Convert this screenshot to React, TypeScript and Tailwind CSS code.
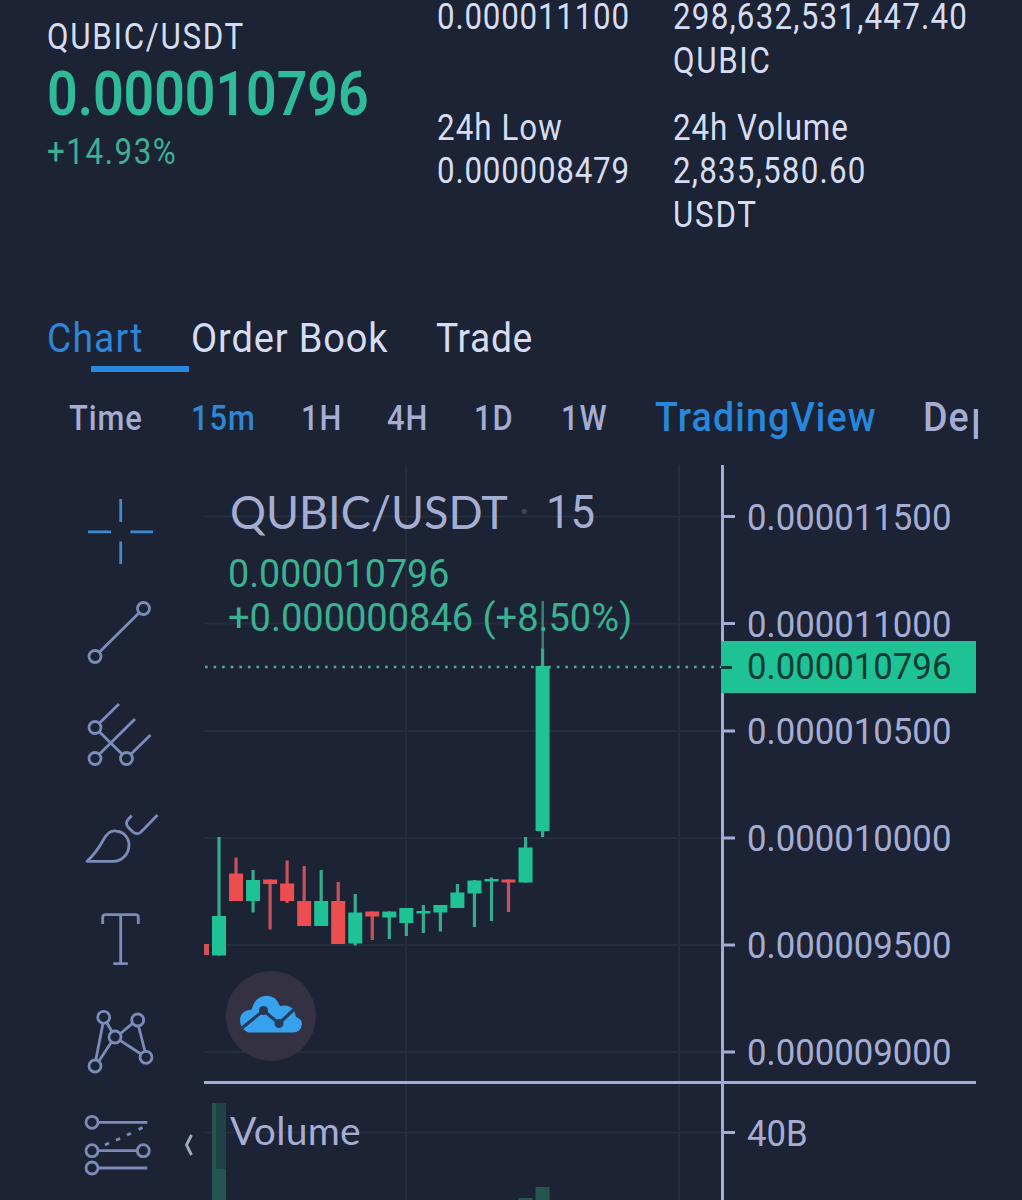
import type { ReactNode } from "react";
import { clsx } from "clsx";

type Candle = {
  up: boolean;
  open: number;
  close: number;
  high: number;
  low: number;
};

// y values are chart pixels, one candle per 17px step
const candles: Candle[] = [
  { up: true, open: 451, close: 490.5, high: 372, low: 490.5 },
  { up: false, open: 408.5, close: 436, high: 392.5, low: 436 },
  { up: true, open: 415, close: 436, high: 405, low: 447.5 },
  { up: false, open: 414.5, close: 419, high: 414.5, low: 464.5 },
  { up: false, open: 418.5, close: 436, high: 395.5, low: 438 },
  { up: false, open: 436, close: 461, high: 401, low: 461 },
  { up: true, open: 436, close: 461, high: 405, low: 461 },
  { up: false, open: 436, close: 479, high: 417, low: 479 },
  { up: true, open: 447.5, close: 478.5, high: 429, low: 480.5 },
  { up: false, open: 446.5, close: 451.5, high: 446.5, low: 475 },
  { up: true, open: 446.5, close: 452.5, high: 446.5, low: 474 },
  { up: true, open: 443, close: 458, high: 443, low: 471 },
  { up: true, open: 446, close: 448.5, high: 440, low: 468 },
  { up: true, open: 440, close: 447.5, high: 440, low: 466.5 },
  { up: true, open: 427.5, close: 443, high: 419, low: 443 },
  { up: true, open: 415.5, close: 428.5, high: 415, low: 462 },
  { up: true, open: 414, close: 416.5, high: 412.5, low: 456 },
  { up: false, open: 414.5, close: 417.5, high: 414.5, low: 447 },
  { up: true, open: 382.5, close: 417.5, high: 372, low: 417.5 },
  { up: true, open: 201, close: 366, high: 183, low: 372 },
];

const prices = [
  "0.000011500",
  "0.000011000",
  "0.000010500",
  "0.000010000",
  "0.000009500",
  "0.000009000",
];

const intervals = [
  { label: "Time", width: "w-[122px]", active: false },
  { label: "15m", width: "w-[110px]", active: true },
  { label: "1H", width: "w-[86px]", active: false },
  { label: "4H", width: "w-[87px]", active: false },
  { label: "1D", width: "w-[87px]", active: false },
  { label: "1W", width: "w-[94px]", active: false },
];

function Line({ className, children }: { className?: string; children: ReactNode }) {
  return (
    <span className={clsx("block w-max origin-left whitespace-nowrap", className)}>{children}</span>
  );
}

function Tool({ children, className }: { children: ReactNode; className?: string }) {
  return (
    <svg
      viewBox="0 0 80 102"
      className={clsx("h-[102px] w-20 shrink-0", className ?? "text-[#7d8bbb]")}
      fill="none"
      stroke="currentColor"
      strokeWidth="2.8"
    >
      {children}
    </svg>
  );
}

function Toolbar() {
  return (
    <div className="flex w-[124px] shrink-0 flex-col pt-[15px]">
      <Tool className="text-[#3f8ad0]">
        <path d="M8 51.8H31M50.5 51.8H73M40.7 19V42M40.7 61.5V84" />
      </Tool>
      <Tool>
        <circle cx="15" cy="74.5" r="6" />
        <circle cx="63.5" cy="26.5" r="6" />
        <path d="M19.3 70.2 59.2 30.8" />
      </Tool>
      <Tool>
        <circle cx="15" cy="43.5" r="6" />
        <circle cx="15" cy="74.5" r="6" />
        <circle cx="46.5" cy="74.5" r="6" />
        <path d="M19.3 39.2 39 20M19.3 70.2 55 35M50.8 70.2 70.5 51M19.3 47.8 42.2 70.2" />
      </Tool>
      <Tool>
        <path
          strokeLinejoin="round"
          d="M7 75.3C16 67 20 60 23.3 54C27 47 32 44.5 36 45C44 45.5 49 52 49 59C49 68 42 75.3 33.3 75.3Z"
        />
        <path d="M51.7 29.5L48.5 33Q44.8 37 48 41L53 46Q57 49.5 61 46L77.5 29" />
      </Tool>
      <Tool>
        <path d="M22.7 36V29.5Q22.7 26.7 25.5 26.7H55.5Q58.3 26.7 58.3 29.5V36M40.7 26.7V75.6M33.3 75.6H47.8" />
      </Tool>
      <Tool>
        <circle cx="23.7" cy="27.3" r="6" />
        <circle cx="57.7" cy="30" r="6" />
        <circle cx="35" cy="47" r="6" />
        <circle cx="66" cy="67.3" r="6" />
        <circle cx="15" cy="76" r="6" />
        <path d="M23 33.3 15.8 70M26.7 32.5 32 41.8M31.5 52 18.8 71.2M40.2 43.8 52.6 33.4M58.5 36 65 61.4M40 50.3 61 64" />
      </Tool>
      <Tool>
        <circle cx="12" cy="30.3" r="6" />
        <circle cx="12" cy="58.7" r="6" />
        <circle cx="63.3" cy="58.7" r="6" />
        <circle cx="12" cy="76" r="6" />
        <path d="M18 30.3H67.3M18 58.7H57.3M18 76H67.3" />
        <path d="M25 53 29 51M36 48.2 40 46.4M47 43 51 41.2M58.5 37.4 62.5 35.6" />
      </Tool>
    </div>
  );
}

function Plot() {
  return (
    <svg viewBox="0 0 773 735" className="block h-[735px] w-[773px]">
      <g stroke="#252d3f" strokeWidth="2">
        {[51.5, 158.5, 266, 373, 480, 587, 667.5].map((y) => (
          <path key={y} d={`M0 ${y}H518`} />
        ))}
        <path d="M202 0V735M475 0V735" />
      </g>

      <g fill="#24564f">
        <rect x="8" y="638" width="14" height="97" fill="#1f4349" />
        <rect x="8" y="638" width="4" height="97" />
        <rect x="8" y="704" width="14" height="31" />
        <rect x="314.5" y="733" width="14" height="2" />
        <rect x="331.5" y="722" width="14" height="13" />
      </g>

      <rect x="0" y="479" width="5" height="11" fill="#d4505c" />
      {candles.map((c, i) => {
        const x = 15 + i * 17.03;
        return (
          <g key={i}>
            <rect x={x - 1.6} y={c.high} width="3.2" height={c.low - c.high} fill={c.up ? "#36ab8f" : "#c9505f"} />
            <rect x={x - 7} y={c.open} width="14" height={c.close - c.open} fill={c.up ? "#1fc294" : "#eb4d51"} />
          </g>
        );
      })}
      <rect x="337.5" y="136" width="2.4" height="48" fill="#3c8379" />

      <path d="M1 202H518" stroke="#58ab9e" strokeWidth="2.6" strokeDasharray="2.6 5.98" />

      <g stroke="#a3acd6" strokeWidth="3">
        <path d="M518.5 0V735M0 617.5H772" />
        {[51.5, 158.5, 266, 373, 480, 587, 667.5].map((y) => (
          <path key={y} d={`M519 ${y}H531`} />
        ))}
      </g>
    </svg>
  );
}

function CloudLogo() {
  return (
    <div className="flex size-[90px] items-center justify-center rounded-full bg-[#333142] pb-1">
      <svg viewBox="0 0 62 38" className="h-[38px] w-[62px]">
        <path
          d="M8 37.5Q0 34 0 25Q0 16 11.5 14.5Q15 1 27 .8Q36 .8 40 11Q49 9 54 15L56 22Q62 24 62 29Q61 37.5 53 37.5Z"
          fill="#36a2ee"
        />
        <path d="M2 33 23.5 15.5 39 28.5 55 13.5" fill="none" stroke="#263c5e" strokeWidth="3.2" />
        <circle cx="23.5" cy="15.5" r="4.5" fill="#2a3450" />
        <circle cx="39" cy="28.5" r="4.5" fill="#263c5e" />
      </svg>
    </div>
  );
}

export default function App() {
  return (
    <div className="flex h-[1200px] w-[1022px] flex-col overflow-hidden bg-[#1c2335] font-['Roboto',sans-serif] text-[#d6ddf3]">
      <header className="flex h-[300px] shrink-0 pl-[47px]">
        <div className="flex w-[390px] flex-col pt-[14px]">
          <Line className="scale-x-[0.87] text-[36px] leading-[46px] tracking-[1.95px]">QUBIC/USDT</Line>
          <Line className="scale-x-[0.865] text-[62px] leading-[68px] font-semibold text-[#2fba99]">0.000010796</Line>
          <Line className="scale-x-[0.87] text-[36px] leading-[48px] tracking-[1.8px] text-[#3fae94]">+14.93%</Line>
        </div>
        <div className="-mt-[4px] flex w-[236px] flex-col gap-[67px] text-[36px] leading-[43.5px]">
          <Line className="scale-x-[0.87] tracking-[0.9px]">0.000011100</Line>
          <div>
            <Line className="scale-x-[0.87] tracking-[1.2px]">24h Low</Line>
            <Line className="scale-x-[0.87] tracking-[0.9px]">0.000008479</Line>
          </div>
        </div>
        <div className="-mt-[4px] flex flex-col gap-[23.5px] text-[36px] leading-[43.5px]">
          <div>
            <Line className="scale-x-[0.87] tracking-[1.4px]">298,632,531,447.40</Line>
            <Line className="scale-x-[0.87] tracking-[1.9px]">QUBIC</Line>
          </div>
          <div>
            <Line className="scale-x-[0.87] tracking-[1.1px]">24h Volume</Line>
            <Line className="scale-x-[0.87] tracking-[1.4px]">2,835,580.60</Line>
            <Line className="scale-x-[0.87] tracking-[2px]">USDT</Line>
          </div>
        </div>
      </header>

      <nav className="flex h-[72px] shrink-0 flex-col justify-between pl-[47px] pt-[14px]">
        <div className="flex text-[40px] leading-[49px]">
          <div className="w-36 text-[#2f86d4]">
            <Line className="scale-x-[0.93] tracking-[1.3px]">Chart</Line>
          </div>
          <div className="w-[245px]">
            <Line className="scale-x-[0.95] tracking-[0.9px]">Order Book</Line>
          </div>
          <Line className="scale-x-[0.93] tracking-[0.7px]">Trade</Line>
        </div>
        <div className="ml-11 h-[6px] w-[98px] bg-[#2989df]" />
      </nav>

      <div className="flex h-[93px] w-[978px] shrink-0 items-start overflow-hidden pl-[69px] pt-[22px] text-[35px] leading-[49px] font-medium text-[#a5add3]">
        {intervals.map((item) => (
          <div key={item.label} className={clsx("shrink-0", item.width, item.active && "text-[#2f86d4]")}>
            <Line className="scale-x-[0.88] tracking-[1.1px]">{item.label}</Line>
          </div>
        ))}
        <div className="w-[268px] shrink-0 text-[40px] leading-[48px] text-[#2787dd]">
          <Line className="scale-x-[0.94] tracking-[1.2px]">TradingView</Line>
        </div>
        <Line className="scale-x-[0.94] text-[40px] leading-[48px] tracking-[1px]">
          De<span className="ml-[2px]">p</span>
        </Line>
      </div>

      <main className="flex h-[735px] shrink-0 pl-20 text-[#a5add3]">
        <Toolbar />
        <div className="relative">
          <Plot />
          <div className="absolute left-[26px] top-[19px] flex text-[46px] leading-[56px]">
            <Line className="scale-x-[0.977] font-['Lato',sans-serif]">QUBIC/USDT</Line>
            <Line className="ml-1 text-[#3d4660]">·</Line>
            <Line className="ml-4 scale-x-[0.95]">15</Line>
          </div>
          <div className="absolute left-[24px] top-[88px] text-[38px] leading-[43.5px] text-[#3bb193]">
            <Line className="scale-x-[0.99]">0.000010796</Line>
            <Line>+0.000000846 (+8.50%)</Line>
          </div>
          <div className="absolute left-[543px] top-0 text-[36px]">
            {prices.map((p) => (
              <Line key={p} className="h-[107px] scale-x-[0.965] leading-[107px]">{p}</Line>
            ))}
            <Line className="-mt-[26px] scale-x-[0.965] leading-[107px]">40B</Line>
          </div>
          <div className="absolute left-[517px] top-[176px] flex h-[52px] w-[255px] items-center bg-[#1fc294] text-[36px] text-[#0d3b35]">
            <div className="mr-[15px] h-[3px] w-[11px] bg-[#0d3b35]" />
            <Line className="scale-x-[0.965]">0.000010796</Line>
          </div>
          <div className="absolute left-[22px] top-[506px]">
            <CloudLogo />
          </div>
          <div className="absolute left-[26px] top-[642px] font-['Lato',sans-serif] text-[39px] leading-[46px]">
            <Line className="tracking-[0.3px]">Volume</Line>
          </div>
          <svg
            viewBox="0 0 10 26"
            className="absolute -left-[20px] top-[667px] h-[26px] w-[10px]"
            fill="none"
            stroke="#a3acbf"
            strokeWidth="2.8"
          >
            <path d="M7.5 3 2.5 13 7.5 23" />
          </svg>
        </div>
      </main>
    </div>
  );
}
